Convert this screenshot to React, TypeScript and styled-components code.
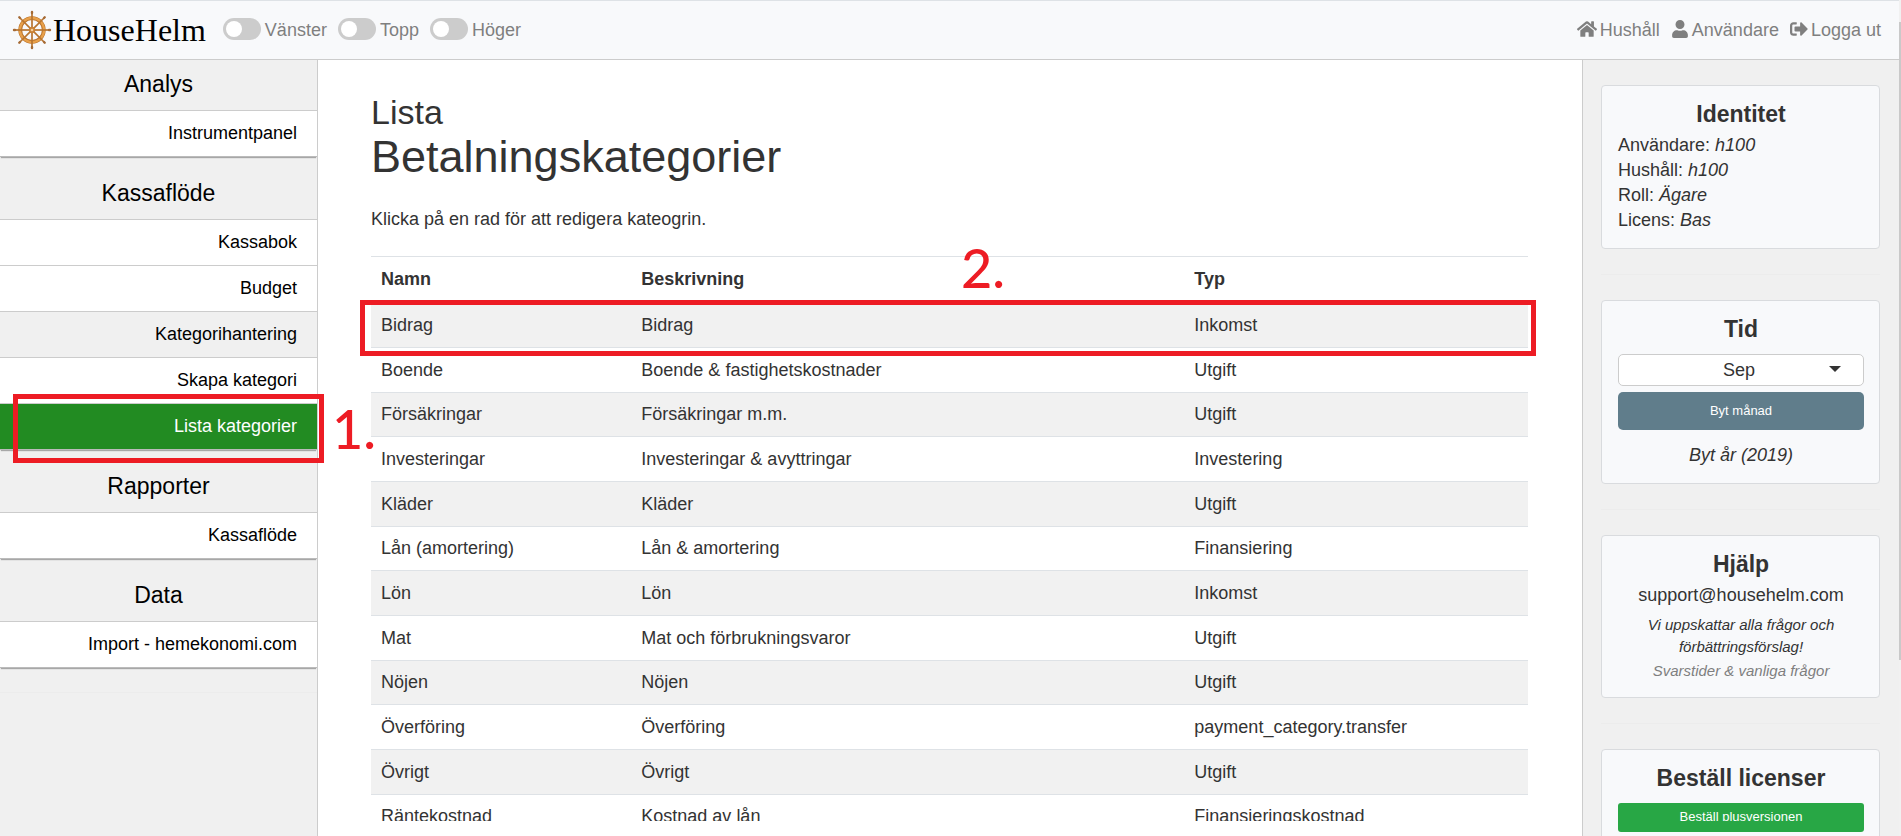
import React from "react";
import styled, { createGlobalStyle } from "styled-components";
import { FaHome, FaUser, FaSignOutAlt } from "react-icons/fa";

const GlobalStyle = createGlobalStyle`
  * { box-sizing: border-box; }
  body {
    margin: 0;
    background: #fff;
    color: #333;
    font: 18px/25px "Liberation Sans", Arial, sans-serif;
  }
  a { color: inherit; text-decoration: none; }
`;

const Page = styled.div`
  position: relative;
  display: flex;
  height: 100vh;
  overflow: hidden;
`;

const Shell = styled.div`
  flex: 1;
  min-width: 0;
  display: flex;
  flex-direction: column;
`;

const Navbar = styled.header`
  display: flex;
  align-items: center;
  flex: none;
  height: 60px;
  padding: 0 18px 0 12px;
  background: #f8f9fb;
  border-top: 1px solid #dee2e6;
  border-bottom: 1px solid #ccc;
  color: #7f7f7f;
`;

const Brand = styled.a`
  display: flex;
  align-items: center;
  gap: 1px;
  margin-right: 17px;
  color: #000;
  font: 32px/40px "Liberation Serif", "Times New Roman", serif;
`;

const Switch = styled.label`
  display: flex;
  align-items: center;
  gap: 4px;
  margin-right: 11px;
`;

const SwitchInput = styled.input`
  appearance: none;
  width: 38px;
  height: 22px;
  margin: 0 0 3px;
  padding: 3px;
  border-radius: 11px;
  background: #ccc;
  &::before {
    content: "";
    display: block;
    width: 16px;
    height: 16px;
    border-radius: 50%;
    background: #fff;
  }
  &:checked::before { margin-left: auto; }
`;

const NavLinks = styled.nav`
  display: flex;
  gap: 11px;
  margin-left: auto;
`;

const NavLink = styled.a`
  display: flex;
  align-items: center;
  gap: 3px;
  svg { margin-bottom: 2px; }
`;

const Columns = styled.div`
  flex: 1;
  min-height: 0;
  display: flex;
`;

const Sidebar = styled.nav`
  flex: none;
  width: 318px;
  background: #f0f0f0;
  border-right: 1px solid #ccc;
  color: #000;
`;

const GroupTitle = styled.h2<{ $first?: boolean }>`
  margin: 0;
  padding: ${(p) => (p.$first ? 10 : 22)}px 0 11px;
  font-size: 23px;
  line-height: 29px;
  font-weight: 400;
  text-align: center;
`;

const GroupList = styled.ul`
  margin: 0;
  padding: 0;
  list-style: none;
  border-bottom: 1px solid #bbb;
  box-shadow: 0 2px 1px -1px rgba(0, 0, 0, 0.3);
`;

const SideItem = styled.li<{ $tone?: "shaded" | "active" }>`
  border-top: 1px solid #ccc;
  background: ${(p) => (p.$tone === "active" ? "#228b22" : p.$tone === "shaded" ? "#f0f0f0" : "#fff")};
  color: ${(p) => (p.$tone === "active" ? "#fff" : "#000")};
  a {
    display: block;
    padding: 10px 20px;
    text-align: right;
  }
`;

const Rule = styled.hr<{ $space: number }>`
  margin: ${(p) => p.$space}px 0;
  border: 0;
  border-top: 1px solid #ececec;
`;

const Main = styled.main`
  flex: 1;
  min-width: 0;
  margin-bottom: 15px;
  padding: 32px 54px 0 53px;
  overflow: hidden;
`;

const Title = styled.h1`
  margin: 0 0 26px;
  font-size: 45px;
  line-height: 48px;
  font-weight: 400;
  small {
    display: block;
    font-size: 34px;
    line-height: 41px;
  }
`;

const Lead = styled.p`
  margin: 0 0 24px;
`;

const Table = styled.table`
  width: 100%;
  table-layout: fixed;
  border-spacing: 0;
  th, td {
    height: 45px;
    padding: 0 10px;
    border-top: 1px solid #dee2e6;
    text-align: left;
  }
  th { height: 46px; }
  tbody tr:nth-child(odd) { background: #f1f1f1; }
  tbody tr:nth-child(3n) td { height: 44px; }
`;

const Col = styled.col<{ $share: number }>`
  width: ${(p) => p.$share}%;
`;

const Aside = styled.aside`
  flex: none;
  width: 317px;
  padding: 25px 19px 0 18px;
  background: #f0f0f0;
  border-left: 1px solid #ccc;
  overflow: hidden;
`;

const Card = styled.section`
  padding: 15px 15px 13px 16px;
  background: #f8f9fb;
  border: 1px solid #d9dbde;
  border-radius: 4px;
  text-align: center;
`;

const CardTitle = styled.h3`
  margin: 0 0 5px;
  font-size: 23px;
  line-height: 27px;
`;

const Facts = styled.ul`
  margin: 0;
  padding: 0 0 2px;
  list-style: none;
  text-align: left;
`;

const SelectBox = styled.div`
  position: relative;
  margin-top: 11px;
  svg {
    position: absolute;
    right: 23px;
    top: 12px;
    pointer-events: none;
  }
`;

const Select = styled.select`
  appearance: none;
  display: block;
  width: 100%;
  height: 32px;
  padding: 0 4px 0 0;
  border: 1px solid #ccc;
  border-radius: 5px;
  background: #fff;
  color: #333;
  font: inherit;
  text-align: center;
  text-align-last: center;
`;

const Button = styled.button<{ $tone: "slate" | "green" }>`
  display: block;
  width: 100%;
  height: ${(p) => (p.$tone === "slate" ? 38 : 29)}px;
  margin-top: ${(p) => (p.$tone === "slate" ? 6 : 11)}px;
  padding: 0;
  border: 0;
  border-radius: ${(p) => (p.$tone === "slate" ? 5 : 3)}px;
  background: ${(p) => (p.$tone === "slate" ? "#607d8b" : "#28a745")};
  color: #fff;
  font: 13px/18px "Liberation Sans", Arial, sans-serif;
`;

const ClippedLabel = styled.span`
  display: block;
  height: 18px;
  margin-bottom: 11px;
  padding-top: 5px;
  overflow: hidden;
`;

const YearLink = styled.a`
  display: block;
  margin: 13px 0 2px;
  font-style: italic;
`;

const SmallNote = styled.p<{ $muted?: boolean }>`
  margin: 0 0 2px;
  padding-top: ${(p) => (p.$muted ? 0 : 6)}px;
  color: ${(p) => (p.$muted ? "#7f7f7f" : "#333")};
  font-size: 15px;
  line-height: 22px;
  font-style: italic;
`;

const Scrollbar = styled.div`
  flex: none;
  width: 2px;
  padding-top: 22px;
  background: #f1f1f1;
  &::before {
    content: "";
    display: block;
    height: 638px;
    background: #c9c9c9;
  }
`;

const Marker = styled.div<{ $x: number; $y: number }>`
  position: absolute;
  left: ${(p) => p.$x}px;
  top: ${(p) => p.$y}px;
  color: #ed1c24;
  font: 500 54px/54px Lato, "Open Sans", sans-serif;
  pointer-events: none;
`;

const SideFrame = styled.div`
  position: absolute;
  left: 13px;
  top: 394px;
  width: 311px;
  height: 69px;
  border: 5px solid #ed1c24;
  pointer-events: none;
`;

const RowFrame = styled.div`
  position: absolute;
  left: 360px;
  right: 365px;
  top: 300px;
  height: 56px;
  border: 5px solid #ed1c24;
  pointer-events: none;
`;

const Wheel = () => (
  <svg width="40" height="40" viewBox="-20 -20 40 40" aria-hidden="true">
    <circle r="11.8" fill="none" stroke="#b8722c" strokeWidth="3.8" />
    <circle r="12" fill="none" stroke="#e8a04a" strokeWidth="2.4" />
    {[0, 45, 90, 135, 180, 225, 270, 315].map((a) => (
      <g key={a} transform={`rotate(${a})`}>
        <path d="M0 -2V-17" stroke="#b8742f" strokeWidth="1.7" />
        <path d="M0 -17V-18" stroke="#a56a35" strokeWidth="2.4" strokeLinecap="round" />
      </g>
    ))}
    <circle r="3.2" fill="#c98236" />
    <circle r="1.3" fill="#f5d09c" />
  </svg>
);

type Item = { label: string; tone?: "shaded" | "active" };
const groups: { title: string; items: Item[] }[] = [
  { title: "Analys", items: [{ label: "Instrumentpanel" }] },
  {
    title: "Kassaflöde",
    items: [
      { label: "Kassabok" },
      { label: "Budget" },
      { label: "Kategorihantering", tone: "shaded" },
      { label: "Skapa kategori" },
      { label: "Lista kategorier", tone: "active" },
    ],
  },
  { title: "Rapporter", items: [{ label: "Kassaflöde" }] },
  { title: "Data", items: [{ label: "Import - hemekonomi.com" }] },
];

const rows = [
  ["Bidrag", "Bidrag", "Inkomst"],
  ["Boende", "Boende & fastighetskostnader", "Utgift"],
  ["Försäkringar", "Försäkringar m.m.", "Utgift"],
  ["Investeringar", "Investeringar & avyttringar", "Investering"],
  ["Kläder", "Kläder", "Utgift"],
  ["Lån (amortering)", "Lån & amortering", "Finansiering"],
  ["Lön", "Lön", "Inkomst"],
  ["Mat", "Mat och förbrukningsvaror", "Utgift"],
  ["Nöjen", "Nöjen", "Utgift"],
  ["Överföring", "Överföring", "payment_category.transfer"],
  ["Övrigt", "Övrigt", "Utgift"],
  ["Räntekostnad", "Kostnad av lån", "Finansieringskostnad"],
];

const facts = [
  ["Användare", "h100"],
  ["Hushåll", "h100"],
  ["Roll", "Ägare"],
  ["Licens", "Bas"],
];

export default function App() {
  return (
    <Page>
      <GlobalStyle />
      <Shell>
        <Navbar>
          <Brand href="#"><Wheel />HouseHelm</Brand>
          {["Vänster", "Topp", "Höger"].map((name) => (
            <Switch key={name}>
              <SwitchInput type="checkbox" />
              {name}
            </Switch>
          ))}
          <NavLinks>
            <NavLink href="#"><FaHome size={20} />Hushåll</NavLink>
            <NavLink href="#"><FaUser size={18} />Användare</NavLink>
            <NavLink href="#"><FaSignOutAlt size={18} />Logga ut</NavLink>
          </NavLinks>
        </Navbar>
        <Columns>
          <Sidebar>
            {groups.map((g, i) => (
              <React.Fragment key={g.title}>
                <GroupTitle $first={i === 0}>{g.title}</GroupTitle>
                <GroupList>
                  {g.items.map((it) => (
                    <SideItem key={it.label} $tone={it.tone}><a href="#">{it.label}</a></SideItem>
                  ))}
                </GroupList>
              </React.Fragment>
            ))}
            <Rule $space={24} />
          </Sidebar>
          <Main>
            <Title><small>Lista</small>Betalningskategorier</Title>
            <Lead>Klicka på en rad för att redigera kateogrin.</Lead>
            <Table>
              <colgroup><Col $share={22.5} /><Col $share={47.8} /><Col $share={29.7} /></colgroup>
              <thead>
                <tr><th>Namn</th><th>Beskrivning</th><th>Typ</th></tr>
              </thead>
              <tbody>
                {rows.map((r) => (
                  <tr key={r[0]}>{r.map((c, i) => <td key={i}>{c}</td>)}</tr>
                ))}
              </tbody>
            </Table>
          </Main>
          <Aside>
            <Card>
              <CardTitle>Identitet</CardTitle>
              <Facts>
                {facts.map(([k, v]) => <li key={k}>{k}: <em>{v}</em></li>)}
              </Facts>
            </Card>
            <Rule $space={25} />
            <Card>
              <CardTitle>Tid</CardTitle>
              <SelectBox>
                <Select aria-label="Månad" defaultValue="Sep"><option>Sep</option></Select>
                <svg width="12" height="6" viewBox="0 0 12 6"><path d="M0 0H12L6 6Z" fill="#333" /></svg>
              </SelectBox>
              <Button $tone="slate">Byt månad</Button>
              <YearLink href="#">Byt år (2019)</YearLink>
            </Card>
            <Rule $space={25} />
            <Card>
              <CardTitle>Hjälp</CardTitle>
              <a href="#">support@househelm.com</a>
              <SmallNote>Vi uppskattar alla frågor och förbättringsförslag!</SmallNote>
              <SmallNote $muted><a href="#">Svarstider &amp; vanliga frågor</a></SmallNote>
            </Card>
            <Rule $space={25} />
            <Card>
              <CardTitle>Beställ licenser</CardTitle>
              <Button $tone="green"><ClippedLabel>Beställ plusversionen</ClippedLabel></Button>
            </Card>
          </Aside>
        </Columns>
      </Shell>
      <Scrollbar />
      <SideFrame />
      <RowFrame />
      <Marker $x={332} $y={402}>1.</Marker>
      <Marker $x={961} $y={241}>2.</Marker>
    </Page>
  );
}
